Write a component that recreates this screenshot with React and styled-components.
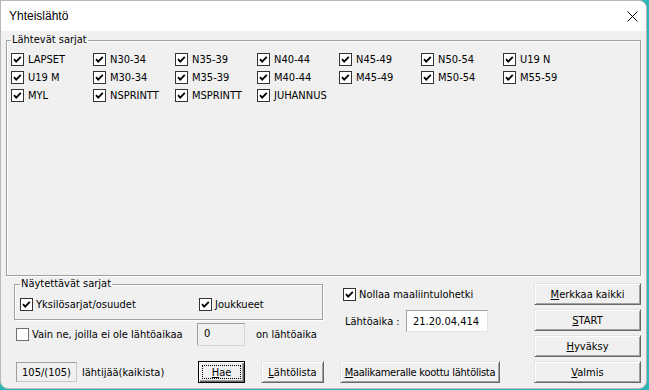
import styled, { createGlobalStyle } from "styled-components";

const GlobalStyle = createGlobalStyle`
  html, body {
    margin: 0;
    padding: 0;
    background: #2cb4b6;
  }
  body {
    font-family: "DejaVu Sans Condensed", "Liberation Sans", Arial, sans-serif;
    font-size: 11px;
    color: #000;
  }
`;

const Window = styled.div`
  width: 647px;
  height: 389px;
  box-sizing: border-box;
  background: #f0f0f0;
  border: 1px solid #b9b9b9;
  border-radius: 0 8px 8px 8px;
  overflow: hidden;
  display: flex;
  flex-direction: column;
`;

const TitleBar = styled.div`
  height: 30px;
  flex: none;
  background: #fff;
  display: flex;
  align-items: center;
  justify-content: space-between;
  padding: 0 8px;
  font-family: "Liberation Sans", Arial, sans-serif;
  font-size: 12px;
`;

const Body = styled.div`
  flex: 1;
  display: flex;
  flex-direction: column;
  padding: 2px 5px 5px 4px;
`;

const Group = styled.fieldset`
  margin: ${(p) => p.$margin || "0"};
  padding: ${(p) => p.$padding || "0"};
  min-width: 0;
  width: ${(p) => p.$width || "auto"};
  height: ${(p) => p.$height};
  box-sizing: border-box;
  border: 1px solid #a0a0a0;
  box-shadow: inset 1px 1px 0 #fff, 1px 1px 0 #fff;
`;

const Legend = styled.legend`
  padding: 0 1px;
  line-height: 14px;
  font-size: 11px;
`;

const SeriesGrid = styled.div`
  display: grid;
  grid-template-columns: repeat(7, 82px);
  grid-auto-rows: 18px;
`;

const CheckLabel = styled.label`
  display: flex;
  align-items: center;
  gap: ${(p) => p.$gap || 4}px;
  height: 18px;
  white-space: nowrap;
  width: ${(p) => p.$width || "auto"};
`;

const Box = styled.span`
  width: 13px;
  height: 13px;
  flex: none;
  display: block;
`;

const BottomArea = styled.div`
  flex: 1;
  display: flex;
  justify-content: space-between;
`;

const LeftMid = styled.div`
  display: flex;
  flex-direction: column;
  justify-content: space-between;
`;

const TopRow = styled.div`
  display: flex;
  gap: 17px;
`;

const LeftCol = styled.div`
  display: flex;
  flex-direction: column;
`;

const ShowGrid = styled.div`
  display: grid;
  grid-template-columns: 179px auto;
`;

const VainRow = styled.div`
  display: flex;
  align-items: center;
  margin-top: 3px;
  padding-left: 11px;
`;

const ZeroField = styled.div`
  width: 48px;
  height: 23px;
  box-sizing: border-box;
  border: 1px solid #a0a0a0;
  border-right-color: #d6d6d6;
  border-bottom-color: #d6d6d6;
  padding: 3px 6px;
  margin-right: 11px;
`;

const MidCol = styled.div`
  display: flex;
  flex-direction: column;
  padding-top: 9px;
`;

const NollaaRow = styled.div`
  padding-left: 3px;
`;

const LahtoRow = styled.div`
  display: flex;
  align-items: center;
  padding-left: 5px;
  margin-top: 7px;
`;

const LahtoLabel = styled.span`
  width: 61px;
`;

const TextInput = styled.div`
  width: 82px;
  height: 22px;
  box-sizing: border-box;
  background: #fff;
  border: 1px solid #a0a0a0;
  border-right-color: #e3e3e3;
  border-bottom-color: #e3e3e3;
  padding-left: 6px;
  display: flex;
  align-items: center;
`;

const ButtonRow = styled.div`
  display: flex;
  align-items: center;
  gap: 16px;
  padding-left: 11px;
`;

const CountGroup = styled.div`
  display: flex;
  align-items: center;
  gap: 5px;
  width: 166px;
`;

const Readout = styled.div`
  width: 61px;
  height: 20px;
  box-sizing: border-box;
  border: 1px solid #a0a0a0;
  border-right-color: #c8c8c8;
  border-bottom-color: #c8c8c8;
  display: flex;
  align-items: center;
  justify-content: center;
`;

const RightCol = styled.div`
  display: flex;
  flex-direction: column;
  gap: 4px;
  padding-top: 7px;
`;

const Button = styled.button`
  width: ${(p) => p.$width}px;
  height: 22px;
  box-sizing: border-box;
  padding: 0;
  font: inherit;
  letter-spacing: ${(p) => (p.$tight ? "-0.25px" : "0")};
  white-space: nowrap;
  color: #000;
  background: #f0f0f0;
  border: 1px solid;
  border-color: #e3e3e3 #696969 #696969 #e3e3e3;
  box-shadow: inset 1px 1px 0 #fff, inset -1px -1px 0 #a0a0a0;
  position: relative;

  ${(p) =>
    p.$default &&
    `
    border-color: #000;
    box-shadow: inset 1px 1px 0 #fff, inset -1px -1px 0 #696969, inset -2px -2px 0 #a0a0a0;
    &::after {
      content: "";
      position: absolute;
      inset: 3px;
      border: 1px dotted #000;
    }
  `}
`;

const check = (on) => (
  <Box>
    <svg width="13" height="13" viewBox="0 0 13 13">
      <rect x="0.5" y="0.5" width="12" height="12" fill="#fff" stroke={on ? "#333" : "#6e6e6e"} />
      {on && (
        <polyline
          points="3,6.2 5.2,8.6 9.8,3.8"
          fill="none"
          stroke="#000"
          strokeWidth="1.8"
        />
      )}
    </svg>
  </Box>
);

const Check = ({ label, on = true, gap, width }) => (
  <CheckLabel $gap={gap} $width={width}>
    {check(on)}
    <span>{label}</span>
  </CheckLabel>
);

const series = [
  "LAPSET", "N30-34", "N35-39", "N40-44", "N45-49", "N50-54", "U19 N",
  "U19 M", "M30-34", "M35-39", "M40-44", "M45-49", "M50-54", "M55-59",
  "MYL", "NSPRINTT", "MSPRINTT", "JUHANNUS",
];

const CloseIcon = () => (
  <svg width="11" height="11" viewBox="0 0 11 11">
    <path d="M0.5 0.5 L10.5 10.5 M10.5 0.5 L0.5 10.5" stroke="#000" strokeWidth="1" />
  </svg>
);

const Key = ({ text }) => (
  <>
    <u>{text[0]}</u>
    {text.slice(1)}
  </>
);

export default function App() {
  return (
    <>
      <GlobalStyle />
      <Window>
        <TitleBar>
          <span>Yhteislähtö</span>
          <CloseIcon />
        </TitleBar>
        <Body>
          <Group $margin="0 0 0 1px" $padding="3px 4px 0 4px" $height="243px">
            <Legend>Lähtevät sarjat</Legend>
            <SeriesGrid>
              {series.map((s) => (
                <Check key={s} label={s} />
              ))}
            </SeriesGrid>
          </Group>
          <BottomArea>
            <LeftMid>
              <TopRow>
                <LeftCol>
                  <Group $margin="1px 0 0 9px" $padding="4px 5px 0 5px" $width="309px" $height="43px">
                    <Legend>Näytettävät sarjat</Legend>
                    <ShowGrid>
                      <Check label="Yksilösarjat/osuudet" gap={3} />
                      <Check label="Joukkueet" gap={3} />
                    </ShowGrid>
                  </Group>
                  <VainRow>
                    <Check label="Vain ne, joilla ei ole lähtöaikaa" on={false} gap={3} width="181px" />
                    <ZeroField>0</ZeroField>
                    <span>on lähtöaika</span>
                  </VainRow>
                </LeftCol>
                <MidCol>
                  <NollaaRow>
                    <Check label="Nollaa maaliintulohetki" gap={3} />
                  </NollaaRow>
                  <LahtoRow>
                    <LahtoLabel>Lähtöaika :</LahtoLabel>
                    <TextInput>21.20.04,414</TextInput>
                  </LahtoRow>
                </MidCol>
              </TopRow>
              <ButtonRow>
                <CountGroup>
                  <Readout>105/(105)</Readout>
                  <span>lähtijää(kaikista)</span>
                </CountGroup>
                <Button $width={47} $default>
                  <Key text="Hae" />
                </Button>
                <Button $width={63}>
                  <Key text="Lähtölista" />
                </Button>
                <Button $width={160} $tight>
                  <Key text="Maalikameralle koottu lähtölista" />
                </Button>
              </ButtonRow>
            </LeftMid>
            <RightCol>
              <Button $width={107}>
                <Key text="Merkkaa kaikki" />
              </Button>
              <Button $width={107}>
                <Key text="START" />
              </Button>
              <Button $width={107}>
                <Key text="Hyväksy" />
              </Button>
              <Button $width={107}>
                <Key text="Valmis" />
              </Button>
            </RightCol>
          </BottomArea>
        </Body>
      </Window>
    </>
  );
}
